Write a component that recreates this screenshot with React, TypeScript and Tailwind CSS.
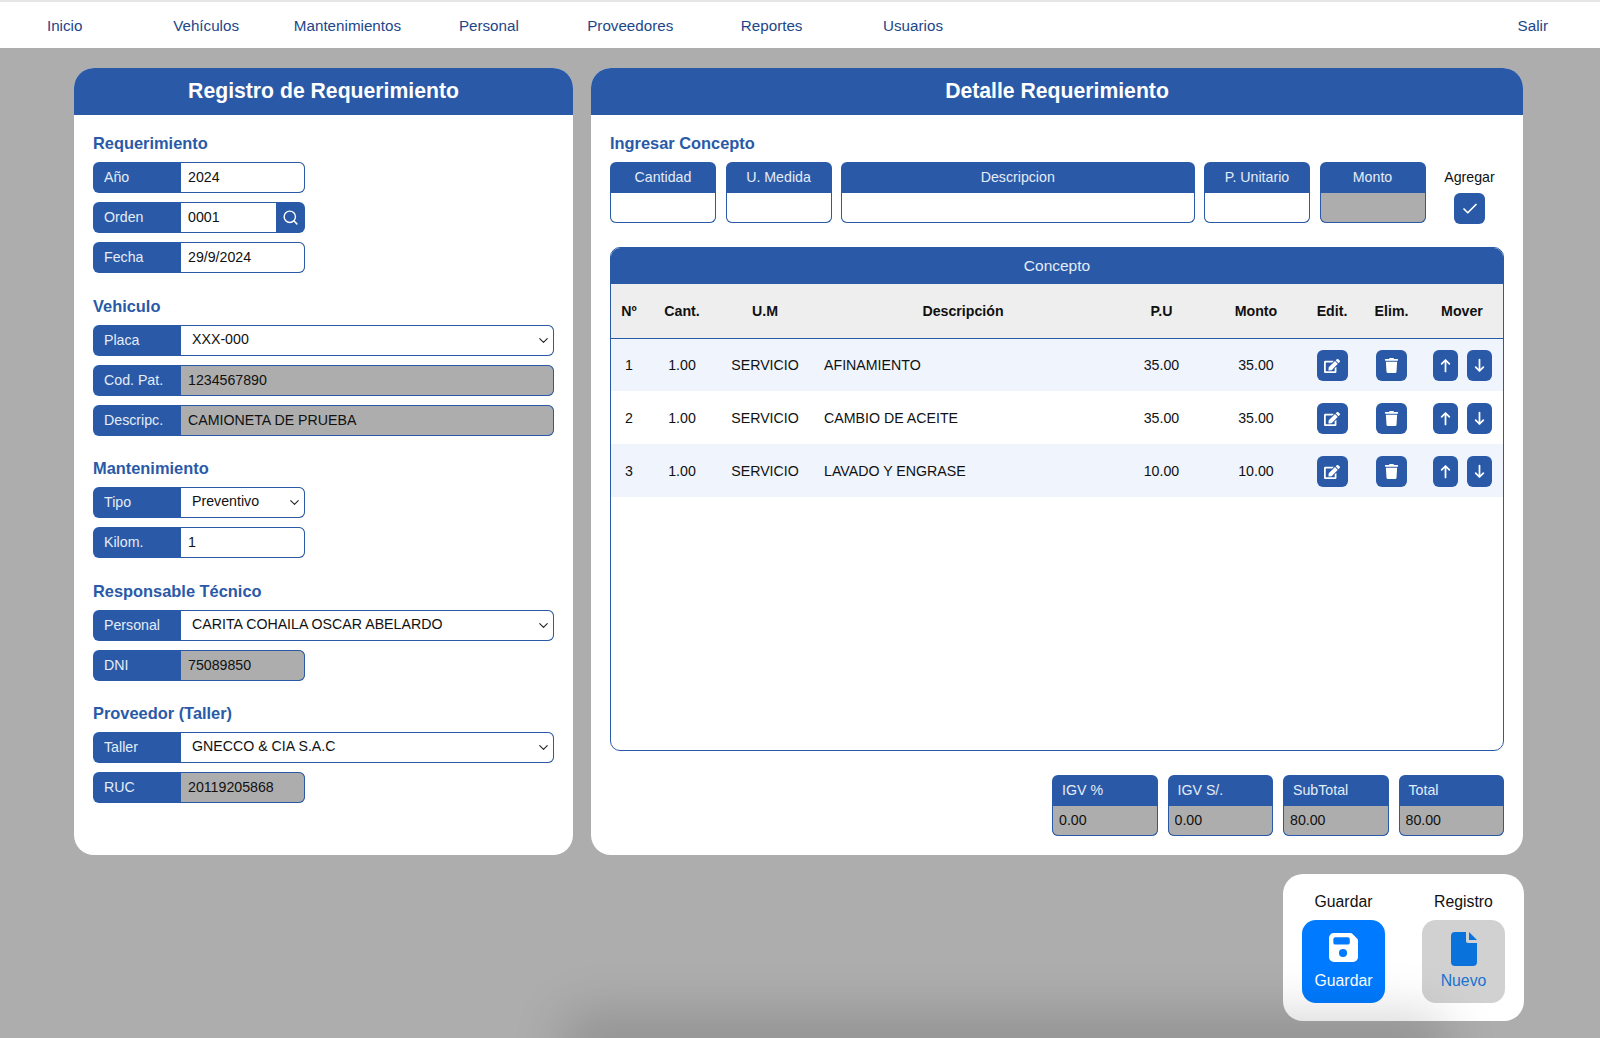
import { Check, ChevronDown, Search } from 'lucide-react';
import type { ReactNode } from 'react';
import { FaEdit, FaTrash } from 'react-icons/fa';

const NAV = ['Inicio', 'Vehículos', 'Mantenimientos', 'Personal', 'Proveedores', 'Reportes', 'Usuarios'];

const ROWS = [
  { n: 1, cant: '1.00', um: 'SERVICIO', desc: 'AFINAMIENTO', pu: '35.00', monto: '35.00' },
  { n: 2, cant: '1.00', um: 'SERVICIO', desc: 'CAMBIO DE ACEITE', pu: '35.00', monto: '35.00' },
  { n: 3, cant: '1.00', um: 'SERVICIO', desc: 'LAVADO Y ENGRASE', pu: '10.00', monto: '10.00' },
];

function SectionTitle({ children }: { children: ReactNode }) {
  return <h3 className="mb-[7px] h-[24px] text-[16.4px] leading-[24px] font-bold text-[#2a5aa7]">{children}</h3>;
}

/** Blue label glued to a field. Short fields are 212px, wide ones fill the panel. */
function Field({ label, wide, children }: { label: string; wide?: boolean; children: ReactNode }) {
  return (
    <div className={`mb-[9px] flex h-[31px] overflow-hidden rounded-[6px] bg-[#2a5aa7] ${wide ? 'w-[461px]' : 'w-[212px]'}`}>
      <span className="w-[88px] shrink-0 pl-[11px] text-[14.2px] leading-[30px] text-[#e4ecf8]">{label}</span>
      {children}
    </div>
  );
}

function TextValue({ value, locked }: { value: string; locked?: boolean }) {
  return (
    <input
      readOnly
      value={value}
      className={`h-full w-full min-w-0 rounded-r-[6px] border border-l-0 border-[#2a5aa7] pb-[1px] pl-[7px] text-[14.2px] text-[#111] outline-none ${locked ? 'bg-[#adadad]' : 'bg-white'}`}
    />
  );
}

function SelectValue({ value }: { value: string }) {
  return (
    <div className="relative h-full w-full min-w-0">
      <select
        value={value}
        onChange={() => {}}
        className="h-full w-full appearance-none rounded-r-[6px] border border-l-0 border-[#2a5aa7] bg-white pb-[1px] pl-[11px] text-[14.2px] text-[#111] outline-none"
      >
        <option>{value}</option>
      </select>
      <ChevronDown size={15} strokeWidth={1.75} className="pointer-events-none absolute top-[8px] right-[3px] text-[#222]" />
    </div>
  );
}

function LabeledBox({ label, value, locked, center, className }: { label: string; value?: string; locked?: boolean; center?: boolean; className: string }) {
  return (
    <div className={`flex h-[61px] flex-col overflow-hidden rounded-[6px] bg-[#2a5aa7] ${className}`}>
      <span className={`h-[31px] shrink-0 text-[14.2px] leading-[30px] text-[#e4ecf8] ${center ? 'text-center' : 'pl-[10px]'}`}>{label}</span>
      <input
        readOnly
        value={value ?? ''}
        className={`h-[30px] w-full rounded-b-[6px] border border-t-0 border-[#2a5aa7] pb-[1px] pl-[6px] text-[14.2px] text-[#111] outline-none ${locked ? 'bg-[#adadad]' : 'bg-white'}`}
      />
    </div>
  );
}

function IconButton({ children, className }: { children: ReactNode; className: string }) {
  return (
    <button className={`inline-flex h-[31px] items-center justify-center rounded-[6px] bg-[#2a5aa7] text-white ${className}`}>
      {children}
    </button>
  );
}

function MoveIcon({ down }: { down?: boolean }) {
  return (
    <svg viewBox="0 0 12 16" className={`h-[15px] w-[11px] ${down ? 'rotate-180' : ''}`} fill="none" stroke="white" strokeWidth="1.9" strokeLinecap="round" strokeLinejoin="round">
      <path d="M6 14.5V2M1.8 6.2 6 2l4.2 4.2" />
    </svg>
  );
}

function FloppyIcon() {
  return (
    <svg viewBox="0 0 30 30" className="h-[29px] w-[29px]" fill="white">
      <path
        fillRule="evenodd"
        d="M5 0h17c1 0 1.7.4 2.4 1L29 5.6c.7.7 1 1.4 1 2.4v17a5 5 0 0 1-5 5H5a5 5 0 0 1-5-5V5a5 5 0 0 1 5-5zm1.5 4.5A2 2 0 0 0 4.500 6.500v3.500a2 2 0 0 0 2 2h13a2 2 0 0 0 2-2V6.500a2 2 0 0 0-2-2h-13zM14.500 16.500a4.200 4.200 0 1 0 0 8.400 4.200 4.200 0 0 0 0-8.400z"
      />
    </svg>
  );
}

function FileIcon() {
  return (
    <svg viewBox="0 0 26 34" className="h-[34px] w-[26px]" fill="#0a73db">
      <path d="M4 0h11v9a2 2 0 0 0 2 2h9v19a4 4 0 0 1-4 4H4a4 4 0 0 1-4-4V4a4 4 0 0 1 4-4z" />
      <path d="M18 0l8 8h-8z" />
    </svg>
  );
}

export default function App() {
  return (
    <div className="relative h-[1038px] overflow-hidden bg-[#adadad] font-['Liberation_Sans',Arial,sans-serif]">
      <nav className="flex h-[48px] items-center border-t-2 border-[#e6e6e6] bg-white pt-[2px] text-[15.2px] text-[#1d4689]">
        <div className="-ml-[6px] flex">
          {NAV.map((item) => (
            <a key={item} className="w-[141.4px] text-center">
              {item}
            </a>
          ))}
        </div>
        <a className="mr-[52px] ml-auto">Salir</a>
      </nav>

      <main className="flex gap-[18px] pt-[20px] pl-[74px]">
        <section className="h-[787px] w-[499px] overflow-hidden rounded-[20px] bg-white">
          <h2 className="h-[47px] bg-[#2a5aa7] text-center text-[21.2px] leading-[46px] font-bold text-white">Registro de Requerimiento</h2>
          <div className="px-[19px] pt-[16px]">
            <SectionTitle>Requerimiento</SectionTitle>
            <Field label="Año"><TextValue value="2024" /></Field>
            <Field label="Orden">
              <input readOnly value="0001" className="h-full w-[95px] min-w-0 border-y border-[#2a5aa7] bg-white pb-[1px] pl-[7px] text-[14.2px] text-[#111] outline-none" />
              <span className="flex flex-1 items-center justify-center text-white"><Search size={17} strokeWidth={2} /></span>
            </Field>
            <Field label="Fecha"><TextValue value="29/9/2024" /></Field>

            <div className="pt-[11.5px]">
              <SectionTitle>Vehiculo</SectionTitle>
              <Field label="Placa" wide><SelectValue value="XXX-000" /></Field>
              <Field label="Cod. Pat." wide><TextValue value="1234567890" locked /></Field>
              <Field label="Descripc." wide><TextValue value="CAMIONETA DE PRUEBA" locked /></Field>
            </div>

            <div className="pt-[11.5px]">
              <SectionTitle>Mantenimiento</SectionTitle>
              <Field label="Tipo"><SelectValue value="Preventivo" /></Field>
              <Field label="Kilom."><TextValue value="1" /></Field>
            </div>

            <div className="pt-[11.5px]">
              <SectionTitle>Responsable Técnico</SectionTitle>
              <Field label="Personal" wide><SelectValue value="CARITA COHAILA OSCAR ABELARDO" /></Field>
              <Field label="DNI"><TextValue value="75089850" locked /></Field>
            </div>

            <div className="pt-[11.5px]">
              <SectionTitle>Proveedor (Taller)</SectionTitle>
              <Field label="Taller" wide><SelectValue value="GNECCO & CIA S.A.C" /></Field>
              <Field label="RUC"><TextValue value="20119205868" locked /></Field>
            </div>
          </div>
        </section>

        <section className="h-[787px] w-[932px] overflow-hidden rounded-[20px] bg-white">
          <h2 className="h-[47px] bg-[#2a5aa7] text-center text-[21.2px] leading-[46px] font-bold text-white">Detalle Requerimiento</h2>
          <div className="px-[19px] pt-[16px] pb-[19px]">
            <SectionTitle>Ingresar Concepto</SectionTitle>
            <div className="flex gap-[9.5px]">
              <LabeledBox label="Cantidad" center className="w-[106px]" />
              <LabeledBox label="U. Medida" center className="w-[106px]" />
              <LabeledBox label="Descripcion" center className="flex-1" />
              <LabeledBox label="P. Unitario" center className="w-[106px]" />
              <LabeledBox label="Monto" center locked className="w-[106px]" />
              <div className="flex w-[69px] flex-col items-center">
                <span className="h-[31px] text-[14.2px] leading-[30px] text-[#111]">Agregar</span>
                <IconButton className="w-[31px]"><Check size={18} strokeWidth={2.25} /></IconButton>
              </div>
            </div>

            <div className="mt-[23px] h-[504px] overflow-hidden rounded-[10px] border border-[#2a5aa7]">
              <div className="h-[36px] bg-[#2a5aa7] text-center text-[15.5px] leading-[36px] text-[#e4ecf8]">Concepto</div>
              <table className="w-full table-fixed border-collapse text-[14.2px] text-[#111]">
                <colgroup>
                  <col className="w-[36px]" />
                  <col className="w-[70px]" />
                  <col className="w-[96px]" />
                  <col className="w-[300px]" />
                  <col className="w-[97px]" />
                  <col className="w-[92px]" />
                  <col className="w-[60px]" />
                  <col className="w-[59px]" />
                  <col />
                </colgroup>
                <thead>
                  <tr className="h-[54px] border-b border-[#2a5aa7] bg-[#eeeeee] text-[14.2px] font-bold">
                    <th className="pt-[2px]">Nº</th>
                    <th className="pt-[2px]">Cant.</th>
                    <th className="pt-[2px]">U.M</th>
                    <th className="pt-[2px]">Descripción</th>
                    <th className="pt-[2px]">P.U</th>
                    <th className="pt-[2px]">Monto</th>
                    <th className="pt-[2px]">Edit.</th>
                    <th className="pt-[2px]">Elim.</th>
                    <th className="pt-[2px]">Mover</th>
                  </tr>
                </thead>
                <tbody>
                  {ROWS.map((row) => (
                    <tr key={row.n} className={`h-[53px] text-center [&>td]:pt-[2px] ${row.n % 2 === 1 ? 'bg-[#eff4fd]' : 'bg-white'}`}>
                      <td>{row.n}</td>
                      <td>{row.cant}</td>
                      <td>{row.um}</td>
                      <td className="pl-[11px] text-left">{row.desc}</td>
                      <td>{row.pu}</td>
                      <td>{row.monto}</td>
                      <td><IconButton className="w-[31px] align-middle"><FaEdit size={16} /></IconButton></td>
                      <td><IconButton className="w-[31px] align-middle"><FaTrash size={15} /></IconButton></td>
                      <td>
                        <div className="flex justify-center gap-[9px]">
                          <IconButton className="w-[25px]"><MoveIcon /></IconButton>
                          <IconButton className="w-[25px]"><MoveIcon down /></IconButton>
                        </div>
                      </td>
                    </tr>
                  ))}
                </tbody>
              </table>
            </div>

            <div className="mt-[24px] flex justify-end gap-[10px]">
              <LabeledBox label="IGV %" value="0.00" locked className="w-[105.5px]" />
              <LabeledBox label="IGV S/." value="0.00" locked className="w-[105.5px]" />
              <LabeledBox label="SubTotal" value="80.00" locked className="w-[105.5px]" />
              <LabeledBox label="Total" value="80.00" locked className="w-[105.5px]" />
            </div>
          </div>
        </section>
      </main>

      <div className="mt-[19px] mr-[76px] ml-auto flex h-[147px] w-[241px] justify-between rounded-[20px] bg-white px-[19px] pt-[18px]">
        <div className="flex w-[83px] flex-col items-center gap-[8px]">
          <span className="text-[15.8px] leading-[20px] text-[#111]">Guardar</span>
          <button className="flex h-[83px] w-[83px] flex-col items-center rounded-[14px] bg-[#007bff] pt-[13px] text-[15.8px] text-white">
            <FloppyIcon />
            <span className="mt-[7px]">Guardar</span>
          </button>
        </div>
        <div className="flex w-[83px] flex-col items-center gap-[8px]">
          <span className="text-[15.8px] leading-[20px] text-[#111]">Registro</span>
          <button className="flex h-[83px] w-[83px] flex-col items-center rounded-[14px] bg-[#d1d1d1] pt-[12px] text-[15.8px] text-[#1a73d0]">
            <FileIcon />
            <span className="mt-[3px]">Nuevo</span>
          </button>
        </div>
      </div>

      {/* soft dark smudge along the bottom edge */}
      <div className="pointer-events-none absolute right-[150px] -bottom-[36px] left-[560px] h-[62px] rounded-[30px] bg-black/15 blur-[24px]" />
    </div>
  );
}
